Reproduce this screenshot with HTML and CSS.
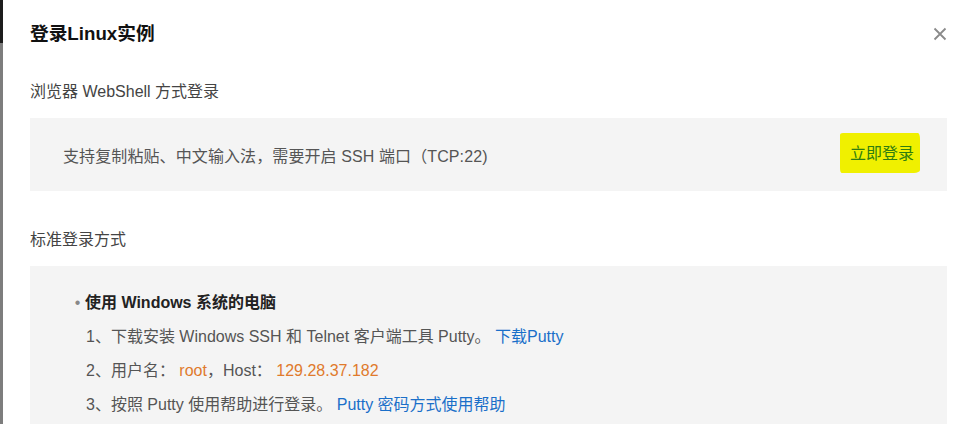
FILE: index.html
```html
<!DOCTYPE html>
<html lang="zh-CN">
<head>
<meta charset="utf-8">
<title>登录Linux实例</title>
<link rel="stylesheet" href="styles.css">
</head>
<body>
<div class="page">
  <div class="backdrop"><div class="backdrop-top"></div></div>
  <div class="modal">
    <div class="modal-header">
      <h1 class="modal-title">登录Linux实例</h1>
      <span class="close" aria-label="关闭">
        <svg width="14" height="14" viewBox="0 0 14 14"><path d="M1.5 1.5 L12.5 12.5 M12.5 1.5 L1.5 12.5" stroke="#8a8a8a" stroke-width="1.8" fill="none"/></svg>
      </span>
    </div>
    <h2 class="section-title first">浏览器 WebShell 方式登录</h2>
    <div class="panel panel-row">
      <span class="panel-text">支持复制粘贴、中文输入法，需要开启 SSH 端口（TCP:22)</span>
      <a class="login-link"><span class="mark">立即登录</span></a>
    </div>
    <h2 class="section-title">标准登录方式</h2>
    <div class="panel panel-list">
      <div class="list-title"><span class="bullet">•</span><span>使用 Windows 系统的电脑</span></div>
      <div class="list-line">1、下载安装 Windows SSH 和 Telnet 客户端工具 Putty。 <a class="link">下载Putty</a></div>
      <div class="list-line">2、用户名： <span class="em">root</span>，Host： <span class="em">129.28.37.182</span></div>
      <div class="list-line">3、按照 Putty 使用帮助进行登录。 <a class="link">Putty 密码方式使用帮助</a></div>
    </div>
  </div>
</div>
</body>
</html>
```
FILE: styles.css
```css
html, body {
  margin: 0;
  padding: 0;
  height: 100%;
  overflow: hidden;
  background: #fff;
}
body {
  font-family: "Liberation Sans", "Noto Sans CJK SC", sans-serif;
  font-size: 16px;
  color: #555;
}
.page {
  display: flex;
  height: 424px;
  overflow: hidden;
}
.backdrop {
  width: 3px;
  flex: none;
  background: #7d7d7d;
}
.backdrop-top {
  height: 43px;
  background: #1c1c1c;
}
.modal {
  flex: 1;
  padding: 22px 20px 0 27px;
}
.modal-header {
  display: flex;
  justify-content: space-between;
  align-items: center;
  height: 24px;
}
.modal-title {
  margin: 0;
  font-size: 18.7px;
  font-weight: bold;
  color: #111;
  line-height: 24px;
}
.close {
  display: flex;
  margin-right: 0;
}
.section-title {
  margin: 37px 0 14px;
  font-size: 16px;
  font-weight: normal;
  color: #444;
  line-height: 24px;
}
.section-title.first {
  margin-top: 34px;
}
.panel {
  background: #f4f4f4;
}
.panel-row {
  height: 73px;
  display: flex;
  align-items: center;
  justify-content: space-between;
  padding: 0 33px;
}
.panel-text {
  letter-spacing: 0.1px;
}
.login-link {
  color: #2f7d10;
}
.mark {
  display: inline-block;
  background: #f0f000;
  padding: 7px 6px 9px 10px;
  margin-right: -6px;
  margin-top: -4px;
  border-radius: 3px 2px 6px 2px / 2px 6px 3px 5px;
}
.panel-list {
  padding: 20px 0 0 56px;
  height: 200px;
}
.list-title, .list-line {
  line-height: 34px;
  height: 34px;
}
.list-title {
  display: flex;
  font-weight: bold;
  color: #222;
  margin-left: -16px;
}
.bullet {
  width: 15px;
  color: #888;
  font-weight: normal;
  text-align: center;
}
.link {
  color: #1a6fc9;
}
.em {
  color: #e07a2c;
}
```
